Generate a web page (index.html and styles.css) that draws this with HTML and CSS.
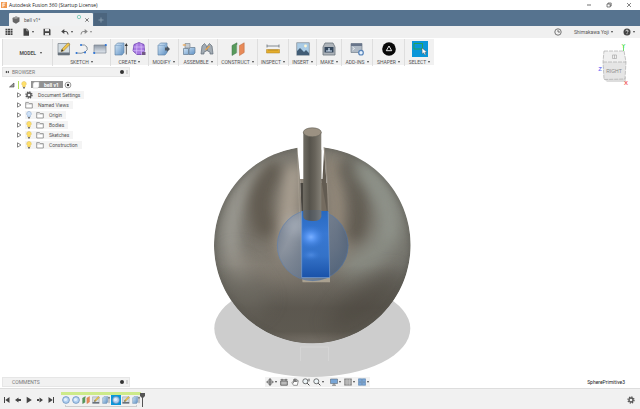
FILE: index.html
```html
<!DOCTYPE html>
<html lang="en">
<head>
<meta charset="utf-8">
<title>Autodesk Fusion 360</title>
<link rel="stylesheet" href="styles.css">
</head>
<body>
<svg class="defs" aria-hidden="true">
  <defs>
    <linearGradient id="steel" x1="0" y1="0" x2="1" y2="1"><stop offset="0" stop-color="#d6e8f7"/><stop offset="1" stop-color="#5f91c4"/></linearGradient>
    <linearGradient id="pale" x1="0" y1="0" x2="0" y2="1"><stop offset="0" stop-color="#8d98a6"/><stop offset="1" stop-color="#e3e9f0"/></linearGradient>
    <symbol id="bulb" viewBox="0 0 8 8"><path d="M4 .4a2.3 2.3 0 0 0-1.3 4.2V6h2.6V4.600A2.3 2.3 0 0 0 4 .4z" fill="#ffe06a" stroke="#d3b048" stroke-width=".4"/><path d="M3 6h2v1.400H3z" fill="#777"/></symbol>
    <symbol id="bulb-off" viewBox="0 0 8 8"><path d="M4 .4a2.300 2.300 0 0 0-1.300 4.200V6h2.600V4.600A2.300 2.300 0 0 0 4 .4z" fill="#cfe2f8" stroke="#7f9fc8" stroke-width=".5"/><path d="M3 6h2v1.400H3z" fill="#777"/></symbol>
    <symbol id="folder" viewBox="0 0 8 8"><path d="M.7 7V1.600h2.800l.7 1h3.100V7z" fill="#fff" stroke="#777" stroke-width=".7"/><path d="M.7 3h6.600" stroke="#999" stroke-width=".5"/></symbol>
    <symbol id="tri" viewBox="0 0 6 6"><path d="M1.500.8 5 3 1.500 5.200z" fill="#fff" stroke="#555" stroke-width=".7"/></symbol>
    <symbol id="gear" viewBox="0 0 8 8"><circle cx="4" cy="4" r="3" fill="none" stroke="#555" stroke-width="1.300" stroke-dasharray="1.300 1.050"/><circle cx="4" cy="4" r="2" fill="none" stroke="#555" stroke-width="1.300"/></symbol>
    <symbol id="dot" viewBox="0 0 10 6"><circle cx="4" cy="3" r="2" fill="#333"/><path d="M9 1v4" stroke="#999" stroke-width=".7"/></symbol>
    <symbol id="box" viewBox="0 0 14 14"><path d="M1 3.500 3.500 1H10v9.500L8 13H1z" fill="url(#steel)" stroke="#557a9f" stroke-width=".6"/><path d="M1 3.500h7V13M8 3.500 10 1" fill="none" stroke="#7ba0c5" stroke-width=".6"/></symbol>
    <symbol id="extrude" viewBox="0 0 14 14"><use href="#box"/><path d="M12.300 12.500V3" stroke="#333" stroke-width=".8"/><path d="m10.700 4 1.600-3 1.500 3z" fill="#333"/></symbol>
    <symbol id="sketch" viewBox="0 0 14 14"><path d="M1 1.500h11.500v11.500H1z" fill="#d4dce1" stroke="#78818a" stroke-width=".7"/><path d="M1 10.500h11.500V13H1z" fill="#68727c"/><path d="m4 9.500 1-2.500L11 .8l1.900 1.700L6.500 9z" fill="#efc44b" stroke="#8f712c" stroke-width=".5"/><path d="m4 9.500 1-2.500 1.500 2z" fill="#333"/></symbol>
    <symbol id="ball" viewBox="0 0 8 8"><circle cx="4" cy="4" r="3.400" fill="#b4d2f2" stroke="#5c87b6" stroke-width=".7"/><circle cx="3.500" cy="3.500" r="1.600" fill="#e3effb"/></symbol>
    <symbol id="planes" viewBox="0 0 14 14"><path d="m1 3.500 5-2.700v9.700L1 13.500z" fill="#579a5b" stroke="#3f7048" stroke-width=".5"/><path d="m5.700 3 1.800-1v8.500L5.700 12z" fill="#e1e1df"/><path d="m8.500 3.500 4.700-2.700v9.700l-4.700 3z" fill="#e88a58" stroke="#b9673d" stroke-width=".5"/></symbol>
    <symbol id="mag" viewBox="0 0 8 8"><circle cx="3.300" cy="3.300" r="2.500" fill="#edf5f8" stroke="#555" stroke-width=".8"/><path d="m5.200 5.200 2.200 2.200" stroke="#444" stroke-width="1"/></symbol>
  </defs>
</svg>

<header class="titlebar">
  <svg class="logo" viewBox="0 0 8 8"><path d="M0 0h8v8H0z" fill="#f2994e"/><path d="M2.500 7V1.500h3.300M2.500 4.200h2.700" fill="none" stroke="#fff" stroke-width="1.200"/></svg>
  <span class="title">Autodesk Fusion 360 (Startup License)</span>
  <button class="win" aria-label="Minimize"><svg viewBox="0 0 6 6"><path d="M1 3h4" stroke="#333" stroke-width=".7"/></svg></button>
  <button class="win" aria-label="Restore"><svg viewBox="0 0 6 6"><path d="M1 2h3.200v3H1zM2 2V1h3.200v3h-1" fill="none" stroke="#333" stroke-width=".6"/></svg></button>
  <button class="win" aria-label="Close"><svg viewBox="0 0 6 6"><path d="m1 1 4 4m0-4L1 5" stroke="#333" stroke-width=".6"/></svg></button>
</header>

<nav class="tabs">
  <div class="tab">
    <svg class="i8" viewBox="0 0 8 8"><path d="M.5 2 4 .5l3.500 1v4L4 7.700.8 6z" fill="#666"/><path d="M.5 2 4 3l3.500-1.500L4 .5z" fill="#999"/></svg>
    <span class="tab-name">bell v1*</span>
    <svg class="sync" viewBox="0 0 6 6"><circle cx="3" cy="3" r="1.700" fill="none" stroke="#6fc5b3" stroke-width=".8"/></svg>
    <button class="close" aria-label="Close tab"><svg viewBox="0 0 6 6"><path d="m1.300 1.300 3.400 3.400m0-3.400L1.300 4.700" stroke="#444" stroke-width=".7"/></svg></button>
  </div>
  <button class="newtab" aria-label="New tab"><svg viewBox="0 0 8 8"><path d="M4 1.500v5M1.500 4h5" stroke="#91a4b5" stroke-width=".8"/></svg></button>
</nav>

<div class="quick">
  <button class="q q-grid" aria-label="Data panel"><svg class="i8" viewBox="0 0 8 8"><path d="M.5.8H2.500v1.700H.5zM3 .8h2v1.700H3zM5.500.8h2v1.700h-2zM.5 3h2v1.700h-2zM3 3h2v1.700H3zM5.500 3h2v1.700h-2zM.5 5.200h2v1.700h-2zM3 5.200h2v1.700H3zM5.500 5.200h2v1.700h-2z" fill="#444"/></svg></button>
  <button class="q q-file caret" aria-label="File"><svg class="i8" viewBox="0 0 8 8"><path d="M1.500.5h3.200L7 2.800v4.900H1.500z" fill="#444"/><path d="M4.700.5v2.300H7" fill="none" stroke="#eee" stroke-width=".5"/></svg></button>
  <button class="q q-save" aria-label="Save"><svg class="i8" viewBox="0 0 8 8"><path d="M.5.8h6l1 1v5.500h-7z" fill="#444"/><path d="M2 .8h4v2.400H2zM2 5h4v2.300H2z" fill="#e8e8e8"/></svg></button>
  <button class="q q-undo caret" aria-label="Undo"><svg class="i8" viewBox="0 0 8 8"><path d="M1 3.500h3.800Q7 3.500 7 6.500" fill="none" stroke="#444" stroke-width="1"/><path d="M3.300 1v5L.2 3.500z" fill="#444"/></svg></button>
  <button class="q q-redo caret dim" aria-label="Redo"><svg class="i8" viewBox="0 0 8 8"><path d="M7 3.500H3.200Q1 3.500 1 6.500" fill="none" stroke="#888" stroke-width="1"/><path d="M4.700 1v5l3.100-2.500z" fill="#888"/></svg></button>
  <button class="q q-clock" aria-label="Job status"><svg class="i8" viewBox="0 0 8 8"><circle cx="4" cy="4" r="3.200" fill="none" stroke="#555" stroke-width=".8"/><path d="M4 2v2h2" fill="none" stroke="#555" stroke-width=".8"/></svg></button>
  <button class="q user caret">Shimakawa Yoji</button>
  <button class="q q-help caret" aria-label="Help"><svg class="i8" viewBox="0 0 8 8"><circle cx="4" cy="4" r="3.500" fill="#444"/><path d="M2.900 3.300Q3 2 4 2t1.100 1.200Q5 3.900 4 4.500M4 5.200v1" fill="none" stroke="#fff" stroke-width=".8"/></svg></button>
</div>

<main class="work">
  <svg class="scene" viewBox="0 38 640 350" role="img" aria-label="Bell model">
    <defs>
      <radialGradient id="body" cx=".48" cy=".44" r=".58"><stop offset="0" stop-color="#82796d"/><stop offset=".65" stop-color="#7b7870"/><stop offset=".88" stop-color="#74736c"/><stop offset="1" stop-color="#65645d"/></radialGradient>
      <linearGradient id="lower" x1="0" y1="0" x2="0" y2="1"><stop offset=".6" stop-color="#524d45" stop-opacity="0"/><stop offset=".82" stop-color="#524d45" stop-opacity=".75"/><stop offset=".94" stop-color="#5a554c" stop-opacity=".85"/><stop offset="1" stop-color="#7d766d"/></linearGradient>
      <linearGradient id="rod"><stop offset="0" stop-color="#6f6c63"/><stop offset=".35" stop-color="#56534b"/><stop offset=".65" stop-color="#67635a"/><stop offset="1" stop-color="#858177"/></linearGradient>
      <linearGradient id="blue" x1="0" y1="0" x2="0" y2="1"><stop offset="0" stop-color="#2768bf"/><stop offset=".35" stop-color="#3878d3"/><stop offset=".68" stop-color="#3472c8"/><stop offset="1" stop-color="#1951a8"/></linearGradient>
      <radialGradient id="glow"><stop offset="0" stop-color="#79afff"/><stop offset=".3" stop-color="#5896f2"/><stop offset="1" stop-color="#3979d5" stop-opacity="0"/></radialGradient>
      <linearGradient id="orb" x1="0" y1="0" x2="1" y2=".5"><stop offset="0" stop-color="#5b7193"/><stop offset=".3" stop-color="#8393aa"/><stop offset="1" stop-color="#455f83"/></linearGradient>
      <clipPath id="ball-clip"><path d="M297.300 147.850A98.300 98.300 0 1 0 324 147.400L327 185V211H301.700L300 179z"/></clipPath>
      <clipPath id="slot"><path d="M301.700 211h26.500l1.500 66.500h-28z"/></clipPath>
      <filter id="b4" filterUnits="userSpaceOnUse" color-interpolation-filters="sRGB" x="180" y="110" width="270" height="270"><feGaussianBlur stdDeviation="7"/></filter>
      <filter id="b8" filterUnits="userSpaceOnUse" color-interpolation-filters="sRGB" x="180" y="110" width="270" height="270"><feGaussianBlur stdDeviation="10"/></filter>
      <filter id="b2" filterUnits="userSpaceOnUse" color-interpolation-filters="sRGB" x="180" y="110" width="270" height="270"><feGaussianBlur stdDeviation="2"/></filter>
    </defs>
    <ellipse cx="312.300" cy="328.500" rx="98" ry="48.500" fill="#cdcdcd"/>
    <path d="M300.500 361v-14h28v14" fill="none" stroke="#d5d5d5"/>
    <g clip-path="url(#ball-clip)">
      <circle cx="312.300" cy="245" r="98.300" fill="url(#body)"/>
      <path d="M246 280C219 250 226 188 278 158" fill="none" stroke="#a3a29a" stroke-width="13" filter="url(#b4)"/>
      <path d="M281 163Q247 190 268 236" fill="none" stroke="#5c554a" stroke-width="22" opacity=".85" filter="url(#b4)"/>
      <path d="M294 165Q287 213 287 256" fill="none" stroke="#b3a899" stroke-width="14" filter="url(#b4)"/>
      <path d="M331 157Q341 203 337 256" fill="none" stroke="#998d7d" stroke-width="13" filter="url(#b4)"/>
      <path d="M345 161Q369 194 354 241" fill="none" stroke="#5b554b" stroke-width="20" opacity=".85" filter="url(#b4)"/>
      <path d="M357 160Q387 190 390 219Q391 256 342 273" fill="none" stroke="#8f948b" stroke-width="18" filter="url(#b8)"/>
      <path d="M360 167Q397 203 389 240" fill="none" stroke="#989d94" stroke-width="6" filter="url(#b4)"/>
      <path d="M232 258Q258 280 304 280" fill="none" stroke="#8f877c" stroke-width="14" filter="url(#b8)"/>
      <circle cx="312.300" cy="245" r="98.300" fill="url(#lower)"/>
      <ellipse cx="244" cy="290" rx="18" ry="28" transform="rotate(-35 244 290)" fill="#747168" opacity=".5" filter="url(#b8)"/>
      <ellipse cx="366" cy="301" rx="46" ry="16" transform="rotate(-38 366 301)" fill="#464139" opacity=".45" filter="url(#b8)"/>
      <circle cx="312.300" cy="245" r="98.300" fill="none" stroke="#5b5a53" stroke-width="3" opacity=".6" filter="url(#b2)"/>
    </g>
    <path d="M297.300 147.700 301.700 277.500" stroke="#c4baab" stroke-width=".5" opacity=".6"/>
    <path d="M300 179h24v33h-22z" fill="#8f877b"/><path d="M300.500 183h3V212h-2z" fill="#494640"/><path d="M321 183h6l1 28h-7z" fill="#746b5f"/>
    <path d="M324 147.400 321.300 150v30l5.500 31h1.700z" fill="#625b51"/>
    <path d="M321.300 147v32h1.200l1.700-31z" fill="#fff"/>
    <path d="M324 147.400Q328 177 328.300 211" fill="none" stroke="#9c9386" stroke-width=".8"/>
    <path d="M302 276h28v6.300h-27.500z" fill="#aaa190"/>
    <circle cx="312.700" cy="245.300" r="35.700" fill="url(#orb)" opacity=".68"/>
    <circle cx="296" cy="226" r="8" fill="#c0c8d3" opacity=".7" filter="url(#b4)"/>
    <circle cx="312.700" cy="245.300" r="35.400" fill="none" stroke="#557aaf" stroke-width=".6" opacity=".7"/>
    <g clip-path="url(#slot)"><path d="M301 210h29v68h-29z" fill="url(#blue)"/><ellipse cx="311" cy="237" rx="14" ry="12" fill="url(#glow)"/><ellipse cx="311" cy="255" rx="10" ry="6" fill="url(#glow)" opacity=".35"/></g>
    <path d="M301.700 211V277.500h28l-1.500-66" fill="none" stroke="#79a1d8" stroke-width=".6"/>
    <path d="M303.300 132.300v84q0 4.500 9 4.700t9-4.700v-84z" fill="url(#rod)"/>
    <path d="M303.300 210v6.300q0 4.500 9 4.700t9-4.700V210z" fill="#42628e" opacity=".25"/>
    <ellipse cx="312.300" cy="132.300" rx="9" ry="4.500" fill="#9b9182" stroke="#625f57" stroke-width=".6"/>
  </svg>

  <section class="toolbar" aria-label="Tools">
    <button class="model caret">MODEL</button>
    <div class="group"><div class="icons">
      <svg viewBox="0 0 14 14"><use href="#sketch"/></svg>
      <svg viewBox="0 0 14 14"><path d="M1.500 11q5 1 8.500-1t2-5q-2-3-6-2" fill="none" stroke="#7a8793" stroke-width=".9"/><circle cx="1.500" cy="11" r="1" fill="#2973d8"/><circle cx="10" cy="10.500" r="1" fill="#2973d8"/><circle cx="6" cy="3" r="1" fill="#2973d8"/></svg>
      <svg viewBox="0 0 14 14"><path d="M1 3h12v8H1z" fill="url(#pale)" stroke="#7b858f" stroke-width=".7"/><circle cx="1.200" cy="11" r="1.100" fill="#2973d8"/><circle cx="12.800" cy="3" r="1.100" fill="#2973d8"/></svg>
    </div><button class="label caret">SKETCH</button></div>
    <div class="group"><div class="icons">
      <svg viewBox="0 0 14 14"><use href="#extrude"/></svg>
      <svg viewBox="0 0 14 14"><path d="m2 2.500 5-2 5 2 .5 6.500-3 3.500H5L1 9z" fill="#a879e1" stroke="#6c3fb0" stroke-width=".8"/><path d="M5 1.500 4.500 12M9 1.500l.5 11M1.500 5H12.500M1 8.700h11.500" stroke="#e0cbff" stroke-width=".6" fill="none"/><path d="M10 10h3.500v3H10z" fill="#715984"/></svg>
    </div><button class="label caret">CREATE</button></div>
    <div class="group"><div class="icons">
      <svg viewBox="0 0 14 14"><use href="#box"/><path d="M8 5.500h2V4l3 3-3 3V8.500H8z" fill="#4c5661"/></svg>
    </div><button class="label caret">MODIFY</button></div>
    <div class="group"><div class="icons">
      <svg viewBox="0 0 14 14"><path d="M1.500 6.500h5v6h-5zM7 7l1.500-1.500H13V11l-1.500 1.500H7z" fill="url(#steel)" stroke="#62798f" stroke-width=".7"/><path d="M3 1.500h5v4.500H3z" fill="#c5cbd0" stroke="#76818c" stroke-width=".6"/><path d="M.8 3h3" stroke="#eda34c" stroke-width="1.200"/></svg>
      <svg viewBox="0 0 14 14"><path d="m1 12 1-8 2.500-2.500L6.500 4v5L4 10v2zM13 12l-1-8-2.500-2.500L7.500 4v5l2.500 1v2z" fill="#a2abb3" stroke="#606b77" stroke-width=".7"/><path d="m5.500 8 4-4" stroke="#e8a44c" stroke-width="1.200"/></svg>
    </div><button class="label caret">ASSEMBLE</button></div>
    <div class="group"><div class="icons"><svg viewBox="0 0 14 14"><use href="#planes"/></svg></div><button class="label caret">CONSTRUCT</button></div>
    <div class="group"><div class="icons"><svg viewBox="0 0 14 14"><path d="M1 4h12M1 2.500v3M13 2.500v3" stroke="#68717a" stroke-width=".8"/><path d="M.5 7.500h13v3.500H.5z" fill="#e4ad2d" stroke="#ad8120" stroke-width=".5"/><path d="M3 7.500V9m2-1.500V9m2-1.500V9m2-1.500V9m2-1.500V9" stroke="#8d6818" stroke-width=".5"/></svg></div><button class="label caret">INSPECT</button></div>
    <div class="group"><div class="icons"><svg viewBox="0 0 14 14"><path d="M.7.7h12.600v12.600H.7z" fill="#a9cbe5" stroke="#8d969d" stroke-width=".8"/><path d="m1 13V9l3-3 4 4 2-2 3 3v2z" fill="#415c75"/><circle cx="9.500" cy="4" r="1.400" fill="#fff6d2"/></svg></div><button class="label caret">INSERT</button></div>
    <div class="group"><div class="icons"><svg viewBox="0 0 14 14"><path d="M1 5 3 1h8l2 4v8H1z" fill="#aeb4ba" stroke="#6a737b" stroke-width=".8"/><path d="M2.500 5h9v5.500h-9z" fill="#34475c"/><path d="M4 9h6M7 6v3" stroke="#def" stroke-width="1.200"/></svg></div><button class="label caret">MAKE</button></div>
    <div class="group"><div class="icons"><svg viewBox="0 0 14 14"><path d="M1 1.500h11v9H1z" fill="#b0bac5" stroke="#737e8d" stroke-width=".7"/><path d="M1 1.500h11v2.500H1z" fill="#68758a"/><path d="m2.500 5 2 1.500-2 1.500" fill="none" stroke="#fff" stroke-width=".7"/><circle cx="11" cy="10.700" r="2.300" fill="#e5f0fc" stroke="#5683b9" stroke-width="1.200"/></svg></div><button class="label caret">ADD-INS</button></div>
    <div class="group"><div class="icons"><svg viewBox="0 0 14 14"><circle cx="7" cy="7" r="6.800" fill="#080808"/><path d="m7 4 2.700 4.700H4.300z" fill="none" stroke="#fff" stroke-width=".9"/></svg></div><button class="label caret">SHAPER</button></div>
    <div class="group"><div class="icons"><svg class="select-icon" viewBox="0 0 16 16"><path d="M0 0h16v16H0z" fill="#0996d9"/><path d="M2 2.500h8.500V8H2z" fill="none" stroke="#27a34b" stroke-width=".9"/><path d="m10 7 .2 6 1.500-1.200 1.100 2.200 1.100-.6-1.100-2 2-.4z" fill="#fff" stroke="#444" stroke-width=".4"/></svg></div><button class="label caret">SELECT</button></div>
  </section>

  <section class="browser">
    <h2 class="panel-head"><svg class="back" viewBox="0 0 6 6"><path d="M3 1v4L.5 3zM5.800 1v4L3.300 3z" fill="#333"/></svg><span>BROWSER</span><svg class="pin" viewBox="0 0 10 6"><use href="#dot"/></svg></h2>
    <ul class="tree">
      <li class="root"><svg class="i6" viewBox="0 0 6 6"><path d="M5 1v4H.5z" fill="#999" stroke="#444" stroke-width=".6"/></svg><i class="active-bar"></i><svg class="i8"><use href="#bulb"/></svg><span class="root-name"><svg class="i8" viewBox="0 0 8 8"><path d="M1 2.500 2.500 1H7v4.700L5.500 7H1z" fill="#fff" stroke="#bbb" stroke-width=".5"/></svg><span>bell v1</span></span><svg class="i8" viewBox="0 0 8 8"><circle cx="4" cy="4" r="2.900" fill="#fff" stroke="#555" stroke-width=".6"/><circle cx="4" cy="4" r="1.200" fill="#333"/></svg></li>
      <li><svg class="i6"><use href="#tri"/></svg><span class="node"><svg class="i8"><use href="#gear"/></svg><span>Document Settings</span></span></li>
      <li><svg class="i6"><use href="#tri"/></svg><span class="node"><svg class="i8"><use href="#folder"/></svg><span>Named Views</span></span></li>
      <li><svg class="i6"><use href="#tri"/></svg><span class="node"><svg class="i8"><use href="#bulb-off"/></svg><svg class="i8"><use href="#folder"/></svg><span>Origin</span></span></li>
      <li><svg class="i6"><use href="#tri"/></svg><span class="node"><svg class="i8"><use href="#bulb"/></svg><svg class="i8"><use href="#folder"/></svg><span>Bodies</span></span></li>
      <li><svg class="i6"><use href="#tri"/></svg><span class="node"><svg class="i8"><use href="#bulb"/></svg><svg class="i8"><use href="#folder"/></svg><span>Sketches</span></span></li>
      <li><svg class="i6"><use href="#tri"/></svg><span class="node"><svg class="i8"><use href="#bulb"/></svg><svg class="i8"><use href="#folder"/></svg><span>Construction</span></span></li>
    </ul>
  </section>

  <svg class="cube" viewBox="0 0 34 50" role="img" aria-label="View cube, right side">
    <path d="M25.500 14V7" stroke="#6be36b"/><path d="M5 30h3" stroke="#7777f5"/><path d="M26 39l2 6" stroke="#f36c6c"/>
    <path d="m6 41 3 3h19v-5z" fill="#ddd"/>
    <path d="M6 13h20l2 11-1 17-21 .5L5 24z" fill="#e5e5e5"/><path d="M6 13h20l2 11H5z" fill="#f0f0f0"/>
    <path d="M6 13h20l2 11-1 17-21 .5L5 24zM5 24h23" fill="none" stroke="#a2a2a2" stroke-width=".6" stroke-dasharray="4 1"/>
    <text x="16" y="35" class="cube-face">RIGHT</text><path d="M14.500 17h4v3.500h-4zM16.500 17v3.500" fill="none" stroke="#aaa" stroke-width=".7"/>
    <text x="25.500" y="10" class="axis y">Y</text><text x="2" y="33" class="axis z">Z</text><text x="28" y="47" class="axis x">X</text>
  </svg>

  <footer class="bottom">
    <h2 class="panel-head comments"><span>COMMENTS</span><svg class="pin" viewBox="0 0 10 6"><use href="#dot"/></svg></h2>
    <nav class="view-tools" aria-label="View">
      <button class="caret" aria-label="Orbit"><svg viewBox="0 0 8 8"><path d="M4 .5v7M.5 4h7M2.500 2.200 4 .7l1.500 1.500M2.500 5.800 4 7.300l1.500-1.500" fill="none" stroke="#555" stroke-width=".9"/><ellipse cx="4" cy="4" rx="3" ry="1.500" fill="none" stroke="#666" stroke-width=".6"/></svg></button>
      <button aria-label="Look at"><svg viewBox="0 0 8 8"><path d="M.7 3h6.600v4.200H.7zM2 .8v2M6 .8v2M.5 1.800h7" fill="#bbb" stroke="#555" stroke-width=".8"/></svg></button>
      <button aria-label="Pan"><svg viewBox="0 0 8 8"><path d="M2.500 7.300.8 4.500l.6-.5 1.100 1V1.500h.8V4l.3-3.200h.8V4l.6-2.800.8.200L5.600 4l1-1.700.7.400-1 4.600z" fill="#fff" stroke="#555" stroke-width=".6"/></svg></button>
      <button aria-label="Zoom"><svg viewBox="0 0 8 8"><use href="#mag"/><path d="M7 .5v3M5.500 2h2.500" stroke="#555" stroke-width=".6"/></svg></button>
      <button class="caret" aria-label="Fit"><svg viewBox="0 0 8 8"><use href="#mag"/></svg></button>
      <button class="caret display" aria-label="Display settings"><svg viewBox="0 0 8 8"><path d="M.5 1h7v4.500h-7z" fill="#78a6d7" stroke="#5c6977" stroke-width=".6"/><path d="M4 5.500v1.700M2 7.200h4" stroke="#555" stroke-width=".7"/></svg></button>
      <button class="caret" aria-label="Grid"><svg viewBox="0 0 8 8"><path d="M.5.8h7v6.500h-7z" fill="#999" stroke="#777" stroke-width=".5"/><path d="M.5 3h7m-7 2h7M3 .8v6.500m2.300-6.500v6.500" stroke="#eee" stroke-width=".4"/></svg></button>
      <button class="caret" aria-label="Viewports"><svg viewBox="0 0 8 8"><path d="M.5.8h3.200v3H.5zM4.300.8h3.200v3H4.300zM.5 4.300h3.200v3H.5zM4.300 4.300h3.200v3H4.300z" fill="#79a6d7" stroke="#4d76a2" stroke-width=".5"/></svg></button>
    </nav>
    <span class="status">SpherePrimitive3</span>
  </footer>
</main>

<section class="timeline" aria-label="Timeline">
  <div class="playback">
    <button aria-label="First"><svg viewBox="0 0 8 8"><path d="M1.500 1v6" stroke="#444"/><path d="M6.500 1v6L2.300 4z" fill="#444"/></svg></button>
    <button aria-label="Step back"><svg viewBox="0 0 8 8"><path d="M4.500 1.500v5L1 4zM4 3h3v2H4z" fill="#444"/></svg></button>
    <button aria-label="Play"><svg viewBox="0 0 8 8"><path d="M1.700.8v6.400L6.800 4z" fill="#444"/></svg></button>
    <button aria-label="Step forward"><svg viewBox="0 0 8 8"><path d="M3.500 1.500v5L7 4zM1 3h3v2H1z" fill="#444"/></svg></button>
    <button aria-label="Last"><svg viewBox="0 0 8 8"><path d="M6.500 1v6" stroke="#444"/><path d="M1.500 1v6l4.200-3z" fill="#444"/></svg></button>
  </div>
  <div class="track">
    <div class="features">
      <svg><use href="#ball"/></svg><svg><use href="#ball"/></svg><svg><use href="#planes"/></svg><svg><use href="#sketch"/></svg><svg><use href="#extrude"/></svg><svg class="on"><use href="#ball"/></svg><svg><use href="#sketch"/></svg><svg><use href="#extrude"/></svg>
    </div>
    <div class="bracket"></div>
  </div>
  <svg class="marker" viewBox="0 0 5 14"><path d="M0 0h5v3L3 5v9H2V5L0 3z" fill="#555"/></svg>
  <button class="settings" aria-label="Timeline settings"><svg class="i8"><use href="#gear"/></svg></button>
</section>
</body>
</html>
```

FILE: styles.css
```css
* { box-sizing: border-box; }
html, body { margin: 0; }
body {
  display: flex;
  flex-direction: column;
  min-height: 100vh;
  background: #fff;
  color: #555;
  font: 5px/6px "Liberation Sans Narrow", Roboto, sans-serif;
}
svg { display: block; flex: none; }
button {
  display: flex;
  align-items: center;
  justify-content: center;
  padding: 0;
  border: 0;
  background: none;
  color: inherit;
  font: inherit;
}
.defs { position: absolute; width: 0; height: 0; }
.i8 { width: 8px; height: 8px; }
.i6 { width: 6px; height: 6px; }
.caret::after {
  content: "";
  margin-left: 2px;
  border: 1px solid transparent;
  border-top: 2px solid #444;
  border-bottom: 0;
}

.titlebar { display: flex; align-items: center; height: 10px; padding: 0 7px 0 1px; color: #222; }
.logo { width: 6px; height: 6px; }
.title { flex: 1; margin-left: 2px; font-family: "Open Sans", sans-serif; }
.win { width: 8px; margin-left: 12px; }
.win svg { width: 6px; height: 6px; }

.tabs { display: flex; align-items: flex-end; height: 16px; padding-left: 9px; background: #56738f; }
.tab { display: flex; align-items: center; width: 84px; height: 13px; padding: 0 3px; background: #f0f1f2; border-radius: 1px 1px 0 0; }
.tab-name { flex: 1; margin-left: 4px; }
.sync { width: 6px; height: 6px; margin-bottom: 5px; }
.close { margin-left: 2px; }
.close svg { width: 6px; height: 6px; }
.newtab { width: 13px; height: 13px; margin-left: 1px; background: #4c657e; }
.newtab svg { width: 8px; height: 8px; }

.quick { display: flex; align-items: center; height: 12px; padding: 0 5px; background: #f0f0f0; }
.q-file { margin-left: 9px; }
.q-save { margin-left: 9px; }
.q-undo { margin-left: 10px; }
.q-redo { margin-left: 7px; }
.q-clock { margin-left: auto; }
.user { margin-left: 12px; }
.q-help { margin-left: 10px; }
.dim::after { opacity: .6; }

.work { position: relative; display: flex; flex: 1; flex-direction: column; padding: 1px 2px; }
.scene { position: absolute; inset: 0; width: 100%; height: 100%; }
.toolbar {
  position: relative;
  display: grid;
  grid-template-columns: 50px 58px 38px 30px 39px 40px 31px 28px 25px 31px 32px 30px;
  align-self: flex-start;
  height: 26px;
  background: #f1f1f1;
}
.group { display: flex; flex-direction: column; align-items: center; padding-top: 2px; border-left: 1px solid #dedede; }
.icons { display: flex; align-items: center; gap: 4px; height: 16px; }
.icons svg { width: 14px; height: 14px; }
.icons .select-icon { width: 16px; height: 16px; }
.label { height: 9px; white-space: nowrap; }
.model { justify-content: flex-end; padding-right: 10px; font-weight: bold; border-left: 1px solid #ddd; }
.model::after { margin-left: 4px; }

.browser { position: relative; width: 128px; margin-top: 2px; }
.panel-head {
  display: flex;
  align-items: center;
  width: 128px;
  height: 10px;
  margin: 0;
  padding: 0 1px 0 2px;
  background: #f1f1f1;
  border: 1px solid #e6e6e6;
  color: #777;
  font-size: 5px;
  font-weight: normal;
}
.back { width: 4px; height: 4px; margin-right: 3px; }
.pin { width: 10px; height: 6px; margin-left: auto; }
.tree { margin: 2px 0 0; padding: 0 0 0 14px; list-style: none; }
.tree li { display: flex; align-items: center; height: 10px; }
.tree .root { height: 11px; margin-left: -7px; }
.node { display: flex; align-items: center; gap: 3px; height: 8px; margin-left: 3px; padding-right: 4px; background: #f4f4f4; }
.node span { margin-left: 2px; }
.active-bar { width: 1px; height: 8px; margin: 0 1px 0 3px; background: #b6df5b; }
.root-name { display: flex; align-items: center; height: 7px; margin: 0 1px 0 3px; padding: 0 4px 0 1px; gap: 4px; background: #929292; color: #fff; font-weight: bold; }

.cube { position: absolute; top: 0; right: 8px; width: 34px; height: 50px; }
.cube-face { fill: #888; font: 5px "Liberation Sans", sans-serif; text-anchor: middle; }
.axis { font: bold 6px "Liberation Sans", sans-serif; text-anchor: middle; }
.y { fill: #6be36b; }
.z { fill: #7777f5; }
.x { fill: #f36c6c; }

.bottom { position: relative; display: grid; grid-template-columns: 1fr auto 1fr; align-items: center; margin-top: auto; padding-right: 5px; }
.comments { padding-left: 9px; }
.view-tools { display: flex; align-items: center; gap: 3px; height: 10px; padding: 0 1px; background: #f2f2f2; }
.view-tools svg { width: 8px; height: 8px; }
.view-tools .caret::after { margin-left: 1px; }
.view-tools .display { margin-left: 3px; }
.status { justify-self: end; margin-right: 8px; color: #222; }

.timeline { display: flex; align-items: center; height: 21px; padding: 1px 5px 0 3px; background: #f1f1f1; border-top: 1px solid #ddd; }
.playback { display: flex; gap: 3px; }
.playback svg { width: 8px; height: 8px; }
.track { margin-left: 6px; border-top: 3px solid #cdea8a; }
.features { display: flex; }
.features svg { width: 10px; height: 10px; padding: 1px; }
.features .on { background: #0996d9; }
.bracket { height: 2px; margin: 0 4px; border: 1px solid #ccc; border-top: 0; }
.marker { width: 5px; height: 14px; margin-left: -1px; }
.settings { margin-left: auto; }
```
